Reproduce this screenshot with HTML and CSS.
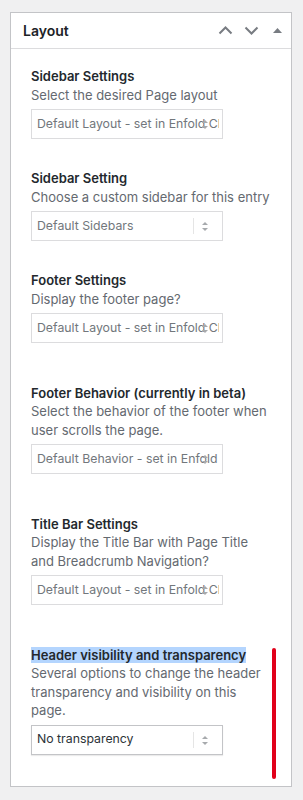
FILE: index.html
```html
<!DOCTYPE html>
<html lang="en">
<head>
    <meta charset="UTF-8">
    <meta name="viewport" content="width=device-width, initial-scale=1.0">
    <title>Layout</title>
    <link rel="stylesheet" href="styles.css">
</head>
<body>
    <div class="postbox">
        <div class="postbox-header">
            <h2 class="postbox-title">Layout</h2>
            <div class="handle-actions">
                <button class="handle-btn up" aria-label="Move up">
                    <svg width="15" height="9" viewBox="0 0 15 9"><path d="M1.5 7.5 L7.5 1.5 L13.5 7.5" fill="none" stroke="#787c82" stroke-width="2"/></svg>
                </button>
                <button class="handle-btn down" aria-label="Move down">
                    <svg width="15" height="9" viewBox="0 0 15 9"><path d="M1.5 1.5 L7.5 7.5 L13.5 1.5" fill="none" stroke="#787c82" stroke-width="2"/></svg>
                </button>
                <button class="handle-btn toggle" aria-label="Toggle panel">
                    <svg width="9" height="5" viewBox="0 0 9 5"><path d="M0 5 L4.5 0 L9 5 Z" fill="#787c82"/></svg>
                </button>
            </div>
        </div>

        <div class="inside">
            <div class="option">
                <strong class="option-title">Sidebar Settings</strong>
                <p class="option-desc">Select the desired Page layout</p>
                <div class="select">
                    <span class="select-value">Default Layout - set in Enfold Child Theme Options</span>
                    <span class="select-arrows"></span>
                </div>
            </div>

            <div class="option">
                <strong class="option-title">Sidebar Setting</strong>
                <p class="option-desc">Choose a custom sidebar for this entry</p>
                <div class="select">
                    <span class="select-value">Default Sidebars</span>
                    <span class="select-sep"></span>
                    <span class="select-arrows"></span>
                </div>
            </div>

            <div class="option spaced">
                <strong class="option-title">Footer Settings</strong>
                <p class="option-desc">Display the footer page?</p>
                <div class="select">
                    <span class="select-value">Default Layout - set in Enfold Child Theme Options</span>
                    <span class="select-arrows"></span>
                </div>
            </div>

            <div class="option spaced">
                <strong class="option-title">Footer Behavior (currently in beta)</strong>
                <p class="option-desc">Select the behavior of the footer when user scrolls the page.</p>
                <div class="select">
                    <span class="select-value">Default Behavior - set in Enfold Child Theme Options</span>
                    <span class="select-arrows"></span>
                </div>
            </div>

            <div class="option spaced">
                <strong class="option-title">Title Bar Settings</strong>
                <p class="option-desc">Display the Title Bar with Page Title and Breadcrumb Navigation?</p>
                <div class="select">
                    <span class="select-value">Default Layout - set in Enfold Child Theme Options</span>
                    <span class="select-arrows"></span>
                </div>
            </div>

            <div class="option last">
                <strong class="option-title"><span class="selected">Header visibility and transparency</span></strong>
                <p class="option-desc">Several options to change the header transparency and visibility on this page.</p>
                <div class="select active">
                    <span class="select-value">No transparency</span>
                    <span class="select-sep"></span>
                    <span class="select-arrows"></span>
                </div>
            </div>
        </div>

        <!-- annotation -->
        <span class="marker"></span>
    </div>
</body>
</html>
```

FILE: styles.css
```css
body {
    margin: 0;
    padding: 12px 11px 14px 10px;
    background: #f0f0f1;
    font-family: Inter, "Liberation Sans", sans-serif;
    font-size: 13px;
    color: #1d2327;
}

.postbox {
    position: relative;
    background: #fff;
    border: 1px solid #c3c4c7;
}

.postbox-header {
    display: flex;
    align-items: center;
    justify-content: space-between;
    height: 35px;
    border-bottom: 1px solid #dcdcde;
    padding: 0 9px 0 12px;
}

.postbox-title {
    margin: 0;
    font-size: 14px;
    font-weight: 600;
    color: #1d2327;
}

.handle-actions {
    display: flex;
    align-items: center;
}

.handle-btn {
    display: flex;
    align-items: center;
    justify-content: center;
    height: 30px;
    padding: 0;
    border: none;
    background: none;
}

.handle-btn.up {
    margin-right: 11px;
}

.handle-btn.down {
    margin-right: 14px;
}

.inside {
    padding: 18px 20px 31px;
}

.option {
    margin-bottom: 30px;
    line-height: 18.5px;
}

.option.spaced {
    margin-bottom: 40.5px;
}

.option.last {
    margin-bottom: 0;
}

.option-title {
    display: block;
    font-weight: 600;
    color: #23282d;
}

.selected {
    background: #b4d5fe;
}

.option-desc {
    margin: 0 0 5px;
    color: #646970;
}

.select {
    position: relative;
    display: flex;
    align-items: center;
    box-sizing: border-box;
    width: 192px;
    height: 30px;
    border: 1px solid #dcdcde;
    padding: 0 3px 0 5px;
    font-size: 12.3px;
    color: #72777c;
}

.select.active {
    border-color: #c3c4c7;
    box-shadow: 0 1px 1px rgba(0, 0, 0, 0.08);
    color: #2c3338;
}

.select-value {
    flex: 1;
    overflow: hidden;
    white-space: nowrap;
}

.select-sep {
    width: 1px;
    height: 16px;
    background: #e5e5e5;
    margin: 0 25px 0 8px;
}

/* the little up/down carets of the native select */
.select-arrows {
    position: absolute;
    right: 14px;
    top: 10px;
    width: 6px;
    height: 9px;
}

.select-arrows::before,
.select-arrows::after {
    content: "";
    position: absolute;
    left: 0;
    border-left: 3px solid transparent;
    border-right: 3px solid transparent;
}

.select-arrows::before {
    top: 0;
    border-bottom: 3px solid #a7aaad;
}

.select-arrows::after {
    bottom: 0;
    border-top: 3px solid #a7aaad;
}

.marker {
    position: absolute;
    right: 15px;
    bottom: 7px;
    width: 4px;
    height: 131px;
    border-radius: 2px;
    background: #e1001a;
}
```
